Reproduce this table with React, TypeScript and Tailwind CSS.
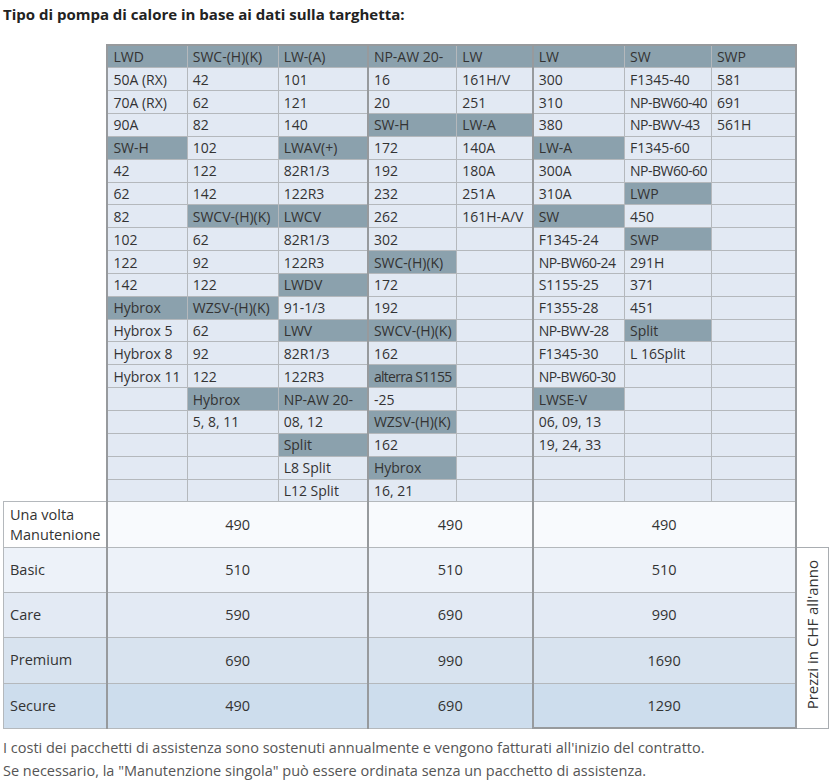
const top: string[][] = [
  ['*LWD', '*SWC-(H)(K)', '*LW-(A)', '*NP-AW 20-', '*LW', '*LW', '*SW', '*SWP'],
  ['50A (RX)', '42', '101', '16', '161H/V', '300', 'F1345-40', '581'],
  ['70A (RX)', '62', '121', '20', '251', '310', 'NP-BW60-40', '691'],
  ['90A', '82', '140', '*SW-H', '*LW-A', '380', 'NP-BWV-43', '561H'],
  ['*SW-H', '102', '*LWAV(+)', '172', '140A', '*LW-A', 'F1345-60', ''],
  ['42', '122', '82R1/3', '192', '180A', '300A', 'NP-BW60-60', ''],
  ['62', '142', '122R3', '232', '251A', '310A', '*LWP', ''],
  ['82', '*SWCV-(H)(K)', '*LWCV', '262', '161H-A/V', '*SW', '450', ''],
  ['102', '62', '82R1/3', '302', '', 'F1345-24', '*SWP', ''],
  ['122', '92', '122R3', '*SWC-(H)(K)', '', 'NP-BW60-24', '291H', ''],
  ['142', '122', '*LWDV', '172', '', 'S1155-25', '371', ''],
  ['*Hybrox', '*WZSV-(H)(K)', '91-1/3', '192', '', 'F1355-28', '451', ''],
  ['Hybrox 5', '62', '*LWV', '*SWCV-(H)(K)', '', 'NP-BWV-28', '*Split', ''],
  ['Hybrox 8', '92', '82R1/3', '162', '', 'F1345-30', 'L 16Split', ''],
  ['Hybrox 11', '122', '122R3', '*alterra S1155', '', 'NP-BW60-30', '', ''],
  ['', '*Hybrox', '*NP-AW 20-', '-25', '', '*LWSE-V', '', ''],
  ['', '5, 8, 11', '08, 12', '*WZSV-(H)(K)', '', '06, 09, 13', '', ''],
  ['', '', '*Split', '162', '', '19, 24, 33', '', ''],
  ['', '', 'L8 Split', '*Hybrox', '', '', '', ''],
  ['', '', 'L12 Split', '16, 21', '', '', '', ''],
];

const prices = [
  { label: ['Una volta', 'Manutenione'], v: ['490', '490', '490'], bg: 'bg-[#f8fafd]' },
  { label: ['Basic'], v: ['510', '510', '510'], bg: 'bg-[#edf2f9]' },
  { label: ['Care'], v: ['590', '690', '990'], bg: 'bg-[#e3eaf4]' },
  { label: ['Premium'], v: ['690', '990', '1690'], bg: 'bg-[#d8e3ef]' },
  { label: ['Secure'], v: ['490', '690', '1290'], bg: 'bg-[#cddded]' },
];

// columns with a thick line on their left side
const thickLeft = [0, 3, 5];

const tight = (t: string) => {
  if (t === 'alterra S1155') return 'tracking-[-0.7px]';
  if (t.startsWith('NP-BW')) return 'tracking-[-0.5px]';
  return '';
};

export default function App() {
  return (
    <div className="w-[832px] px-[3px] pt-[4px] font-['Open_Sans',sans-serif] text-[#333]">
      <h2 className="text-[15px] font-bold leading-[20px] text-[#222]">
        Tipo di pompa di calore in base ai dati sulla targhetta:
      </h2>

      <table className="mt-[20px] table-fixed border-collapse text-[14px]">
        <colgroup>
          <col className="w-[104px]" />
          <col className="w-[80px]" />
          <col className="w-[91px]" />
          <col className="w-[90px]" />
          <col className="w-[89px]" />
          <col className="w-[76px]" />
          <col className="w-[92px]" />
          <col className="w-[87px]" />
          <col className="w-[85px]" />
          <col className="w-[33px]" />
        </colgroup>
        <tbody>
          {top.map((row, r) => (
            <tr key={r} className="h-[22.85px]">
              <td className="p-0" />
              {row.map((c, i) => {
                const hl = c.startsWith('*');
                const text = hl ? c.slice(1) : c;
                return (
                  <td
                    key={i}
                    className={
                      'overflow-hidden whitespace-nowrap p-0 pl-[5px] leading-[19px] border border-[#b4b8bc] ' +
                      (hl ? 'bg-[#8ba1ad] ' : 'bg-[#e2e9f3] ') +
                      (thickLeft.includes(i) ? 'border-l-2 border-l-[#979a9d] ' : '') +
                      (i === 7 ? 'border-r-2 border-r-[#979a9d] ' : '') +
                      (r === 0 ? 'border-t-2 border-t-[#979a9d] ' : '') +
                      tight(text)
                    }
                  >
                    {text}
                  </td>
                );
              })}
              <td className="p-0" />
            </tr>
          ))}

          {prices.map((p, r) => (
            <tr key={p.label[0]} className="h-[45.3px] text-[14.5px]">
              <td
                className={
                  'border border-[#b4b8bc] border-r-2 border-r-[#979a9d] p-0 pl-[6px] leading-[20px] ' +
                  (r === 0 ? 'bg-white' : p.bg)
                }
              >
                {p.label.map((l) => (
                  <div key={l}>{l}</div>
                ))}
              </td>
              <td colSpan={3} className={'border border-[#b4b8bc] border-x-2 border-x-[#979a9d] p-0 text-center ' + p.bg}>
                {p.v[0]}
              </td>
              <td colSpan={2} className={'border border-[#b4b8bc] border-x-2 border-x-[#979a9d] p-0 text-center ' + p.bg}>
                {p.v[1]}
              </td>
              <td
                colSpan={3}
                className={
                  'border border-[#b4b8bc] border-x-2 border-x-[#979a9d] p-0 text-center ' +
                  p.bg +
                  (r === prices.length - 1 ? ' border-b-2 border-b-[#979a9d]' : '')
                }
              >
                {p.v[2]}
              </td>
              {r === 0 && <td className="p-0" />}
              {r === 1 && (
                <td rowSpan={4} className="border border-[#a9adb1] bg-white p-0 text-center align-middle">
                  <span className="inline-block rotate-180 whitespace-nowrap text-[15px] leading-[20px] [writing-mode:vertical-rl]">
                    Prezzi in CHF all'anno
                  </span>
                </td>
              )}
            </tr>
          ))}
        </tbody>
      </table>

      <div className="mt-[7px] text-[14.5px] leading-[23px] text-[#555] [font-stretch:96%]">
        <p>I costi dei pacchetti di assistenza sono sostenuti annualmente e vengono fatturati all'inizio del contratto.</p>
        <p>Se necessario, la "Manutenzione singola" può essere ordinata senza un pacchetto di assistenza.</p>
      </div>
    </div>
  );
}
